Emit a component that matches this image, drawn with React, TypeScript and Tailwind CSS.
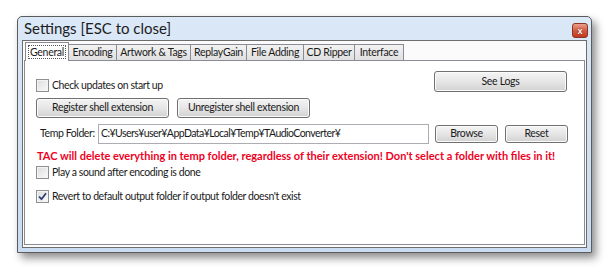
import React from 'react';

const tabs = ['General', 'Encoding', 'Artwork & Tags', 'ReplayGain', 'File Adding', 'CD Ripper', 'Interface'];
const tabWidths = [44, 49, 75, 57, 58, 52, 50];

function WinButton({ label, className }: { label: string; className: string }) {
  return (
    <button
      className={`flex shrink-0 items-center justify-center whitespace-nowrap rounded-[3px] border border-[#707070] bg-gradient-to-b from-[#f4f4f4] via-[#e6e6e6] to-[#d2d2d2] text-[10.5px] tracking-[-0.3px] text-[#1a1a1a] shadow-[inset_0_0_0_1px_#fbfbfb] ${className}`}
    >
      {label}
    </button>
  );
}

function CheckBox({ label, checked = false }: { label: string; checked?: boolean }) {
  return (
    <label className="flex items-center gap-[3px] whitespace-nowrap text-[10.5px] leading-[16px] tracking-[-0.4px] text-[#1a1a1a]">
      <span className="flex h-[13px] w-[13px] items-center justify-center border border-[#8e8f8f] bg-gradient-to-br from-[#dcdcdc] to-[#fbfbfb] shadow-[inset_0_0_0_1px_#f4f4f4]">
        {checked ? (
          <svg width="9" height="9" viewBox="0 0 9 9">
            <path d="M1 4.5 L3.5 7.2 L8 1.2" fill="none" stroke="#2a3f75" strokeWidth="1.8" />
          </svg>
        ) : null}
      </span>
      {label}
    </label>
  );
}

export default function App() {
  return (
    <div className="h-[274px] w-[611px] overflow-hidden bg-white pl-[17px] pt-[16px] font-['Lato',sans-serif]">
      <div className="flex h-[237px] w-[575px] flex-col rounded-t-[5px] border border-[#5b5b5b] bg-gradient-to-b from-[#dbe8f7] to-[#c9dcf1] shadow-[4px_5px_8px_rgba(0,0,0,0.45)]">
        {/* title bar */}
        <div className="flex h-[23px] items-center pl-[6px] pr-[3px]">
          <span className="text-[15px] text-[#1c1c1c]">Settings [ESC to close]</span>
          <div className="ml-auto mt-[3px] flex h-[15px] w-[16px] items-center justify-center rounded-[3px] border border-[#8a3526] bg-gradient-to-b from-[#e9a08d] via-[#d25a43] to-[#c4381f]">
            <span className="text-[9px] font-bold leading-none text-white [text-shadow:0_0_2px_#7a1a0a]">x</span>
          </div>
        </div>
        {/* client area */}
        <div className="mx-[4px] mb-[4px] flex flex-1 flex-col border border-[#6d6d6d] bg-[#fbfbfb] px-[1px] pb-[2px] pt-[1px]">
          <div className="flex h-[18px] items-end pl-[1px]">
            {tabs.map((t, i) =>
              i === 0 ? (
                <div
                  key={t}
                  className="relative z-10 -mb-[1px] flex h-[19px] shrink-0 items-center justify-center border border-b-0 border-[#898c95] bg-white px-[2px]"
                  style={{ width: tabWidths[i] }}
                >
                  <span className="whitespace-nowrap border border-dotted border-[#555] px-[1px] text-[10.5px] leading-[12px] tracking-[-0.3px] text-[#1a1a1a]">{t}</span>
                </div>
              ) : (
                <div
                  key={t}
                  className="-ml-[1px] flex h-[16px] shrink-0 items-center justify-center whitespace-nowrap border border-b-0 border-[#898c95] bg-gradient-to-b from-[#f2f2f2] to-[#e0e0e0] text-[10.5px] tracking-[-0.3px] text-[#1a1a1a]"
                  style={{ width: tabWidths[i] }}
                >
                  {t}
                </div>
              )
            )}
          </div>
          <div className="flex flex-1 flex-col border border-[#898c95] bg-white pl-[11px] pr-[17px] pt-[10px]">
            <div className="flex h-[21px] items-end justify-between">
              <div className="-mb-[1px]">
                <CheckBox label="Check updates on start up" />
              </div>
              <WinButton label="See Logs" className="h-[21px] w-[133px]" />
            </div>
            <div className="mt-[6px] flex gap-[8px]">
              <WinButton label="Register shell extension" className="h-[20px] w-[133px]" />
              <WinButton label="Unregister shell extension" className="h-[20px] w-[133px]" />
            </div>
            <div className="mt-[6px] flex items-center">
              <span className="ml-[4px] w-[58px] shrink-0 whitespace-nowrap text-[10.5px] tracking-[-0.4px] text-[#1a1a1a]">Temp Folder:</span>
              <div className="flex h-[20px] w-[331px] shrink-0 items-center whitespace-nowrap border border-[#abadb3] bg-white px-[2px] text-[10.5px] tracking-[-0.55px] text-[#1a1a1a]">
                C:¥Users¥user¥AppData¥Local¥Temp¥TAudioConverter¥
              </div>
              <WinButton label="Browse" className="ml-[6px] h-[18px] w-[63px]" />
              <WinButton label="Reset" className="ml-[7px] h-[18px] w-[63px]" />
            </div>
            <p className="ml-[1px] mt-[5px] whitespace-nowrap text-[11px] font-bold leading-[14px] text-[#f0001e]">
              TAC will delete everything in temp folder, regardless of their extension! Don't select a folder with files in it!
            </p>
            <div className="mt-[1px]">
              <CheckBox label="Play a sound after encoding is done" />
            </div>
            <div className="mt-[8px]">
              <CheckBox label="Revert to default output folder if output folder doesn't exist" checked />
            </div>
          </div>
        </div>
      </div>
    </div>
  );
}
